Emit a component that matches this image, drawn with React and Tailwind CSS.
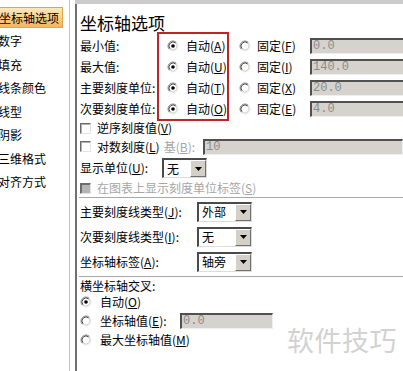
const leftItems = ['坐标轴选项', '数字', '填充', '线条颜色', '线型', '阴影', '三维格式', '对齐方式']

function Radio({ checked }) {
  return (
    <svg width="12" height="12" viewBox="0 0 12 12" className="shrink-0">
      <circle cx="6" cy="6" r="5" fill="#fff" />
      <path d="M2.46 9.54 A5 5 0 0 1 9.54 2.46" fill="none" stroke="#8a8a8a" strokeWidth="1" />
      <path d="M9.54 2.46 A5 5 0 0 1 2.46 9.54" fill="none" stroke="#ececec" strokeWidth="1" />
      <path d="M3.17 8.83 A4 4 0 0 1 8.83 3.17" fill="none" stroke="#4a4a4a" strokeWidth="1" />
      <path d="M8.83 3.17 A4 4 0 0 1 3.17 8.83" fill="none" stroke="#d4d0c8" strokeWidth="1" />
      {checked && <circle cx="6" cy="6" r="1.8" fill="#000" />}
    </svg>
  )
}

function Check({ disabled }) {
  return (
    <span
      className={`block w-[11px] h-[11px] shrink-0 border border-t-[#6a6a6a] border-l-[#6a6a6a] border-r-[#e4e4e4] border-b-[#e4e4e4] ${
        disabled ? 'bg-[#b4b4b4] shadow-[inset_1px_1px_0_#6e6e6e]' : 'bg-white shadow-[inset_1px_1px_0_#b0b0b0]'
      }`}
    />
  )
}

// mnemonic label, e.g. 自动(A)
function Mn({ text, k, colon }) {
  return (
    <span>
      {text}(<span className="underline">{k}</span>){colon ? ':' : ''}
    </span>
  )
}

function Field({ value, className }) {
  return (
    <div
      className={`h-[16px] flex items-center bg-[#d6d3ce] border-t-2 border-l-2 border-t-[#505050] border-l-[#505050] border-b border-r border-b-[#eeeeee] border-r-[#eeeeee] pl-[1px] font-['Liberation_Mono',monospace] text-[12px] text-[#8c8c8c] ${className}`}
    >
      {value}
    </div>
  )
}

function Select({ value, className }) {
  return (
    <div
      className={`h-[20px] flex items-center bg-white border-t-2 border-l-2 border-t-[#4a4a4a] border-l-[#4a4a4a] border-b border-r border-b-[#dcdcdc] border-r-[#dcdcdc] ${className}`}
    >
      <span className="flex-1 pl-[3px] text-[12px] text-black">{value}</span>
      <span className="w-[16px] h-full flex items-center justify-center bg-[#d4d0c8] border-l border-t border-l-white border-t-white border-r border-b border-r-[#707070] border-b-[#707070]">
        <svg width="7" height="4" viewBox="0 0 7 4">
          <path d="M0 0 H7 L3.5 4 Z" fill="#000" />
        </svg>
      </span>
    </div>
  )
}

function Divider() {
  return <div className="h-[2px] border-t border-t-[#a8a8a8] border-b border-b-white" />
}

const axisRows = [
  { label: '最小值:', ak: 'A', fk: 'F', value: '0.0' },
  { label: '最大值:', ak: 'U', fk: 'I', value: '140.0' },
  { label: '主要刻度单位:', ak: 'T', fk: 'X', value: '20.0' },
  { label: '次要刻度单位:', ak: 'O', fk: 'E', value: '4.0' },
]

export default function App() {
  return (
    <div className="relative w-[403px] h-[371px] overflow-hidden bg-white flex font-['Noto_Sans_CJK_SC','Liberation_Sans',sans-serif] text-[12px] text-black leading-none">
      {/* category list */}
      <div className="w-[70px] shrink-0 border-r border-r-[#c4c4c4] pt-[6px]">
        {leftItems.map((item, i) => (
          <div key={item} className="h-[23.5px] flex items-center">
            <span
              className={`h-[21px] flex items-center pl-[1px] -ml-[3px] ${
                i === 0
                  ? 'w-[66px] bg-gradient-to-b from-[#fde9bd] to-[#f4b45a] border border-[#e6a24a]'
                  : ''
              }`}
            >
              {item}
            </span>
          </div>
        ))}
      </div>

      {/* options panel */}
      <div className="ml-[5px] flex-1 min-w-0 flex flex-col">
        <div className="h-[4px] bg-[#cbcbcb]" />
        <div className="flex-1 border-l-2 border-l-[#707070] pl-[3px] flex flex-col">
          <div className="mt-[8px] h-[20px] flex items-center text-[17px]">坐标轴选项</div>

          <div className="mt-[3px] flex items-start">
            <div className="w-[77px] shrink-0 flex flex-col">
              {axisRows.map((r) => (
                <div key={r.label} className="h-[21px] flex items-center whitespace-nowrap">
                  {r.label}
                </div>
              ))}
            </div>
            <div className="w-[72px] shrink-0 -mt-[3px] -mb-[2px] border-2 border-[#bf2429] pt-[1px] pl-[8px] flex flex-col">
              {axisRows.map((r) => (
                <div key={r.ak} className="h-[21px] flex items-center gap-[7px] whitespace-nowrap">
                  <Radio checked />
                  <Mn text="自动" k={r.ak} />
                </div>
              ))}
            </div>
            <div className="ml-[10px] flex-1 flex flex-col">
              {axisRows.map((r) => (
                <div key={r.fk} className="h-[21px] flex items-center whitespace-nowrap">
                  <Radio />
                  <span className="ml-[6px] w-[53px]">
                    <Mn text="固定" k={r.fk} />
                  </span>
                  <Field value={r.value} className="w-[120px] shrink-0" />
                </div>
              ))}
            </div>
          </div>

          <div className="h-[18px] flex items-center gap-[6px]">
            <Check />
            <Mn text="逆序刻度值" k="V" />
          </div>
          <div className="h-[19px] flex items-center whitespace-nowrap">
            <Check />
            <span className="ml-[6px] w-[78px]">
              <Mn text="对数刻度" k="L" />
            </span>
            <span className="w-[46px] text-[#a6a6a6]">
              <Mn text="基" k="B" colon />
            </span>
            <Field value="10" className="w-[200px] shrink-0" />
          </div>
          <div className="h-[24px] flex items-center whitespace-nowrap">
            <span className="w-[82px]">
              <Mn text="显示单位" k="U" colon />
            </span>
            <Select value="无" className="w-[45px]" />
          </div>
          <div className="h-[16px] flex items-center gap-[6px] whitespace-nowrap text-[#a6a6a6]">
            <Check disabled />
            <Mn text="在图表上显示刻度单位标签" k="S" />
          </div>

          <div className="mt-[1px] -ml-[1px]">
            <Divider />
          </div>

          {[
            ['主要刻度线类型', 'J', '外部'],
            ['次要刻度线类型', 'I', '无'],
            ['坐标轴标签', 'A', '轴旁'],
          ].map(([label, k, v]) => (
            <div key={label} className="h-[25px] flex items-center whitespace-nowrap">
              <span className="w-[117px]">
                <Mn text={label} k={k} colon />
              </span>
              <Select value={v} className="w-[55px]" />
            </div>
          ))}

          <div className="mt-[2px] -ml-[1px]">
            <Divider />
          </div>

          <div className="h-[16px] flex items-center">横坐标轴交叉:</div>
          <div className="h-[15px] flex items-center gap-[8px]">
            <Radio checked />
            <Mn text="自动" k="O" />
          </div>
          <div className="h-[23px] flex items-center whitespace-nowrap">
            <Radio />
            <span className="ml-[8px] w-[80px]">
              <Mn text="坐标轴值" k="E" colon />
            </span>
            <Field value="0.0" className="w-[93px] shrink-0" />
          </div>
          <div className="h-[15px] flex items-center gap-[8px]">
            <Radio />
            <Mn text="最大坐标轴值" k="M" />
          </div>
        </div>
      </div>

      {/* watermark */}
      <div className="absolute left-[287px] top-[325px] text-[27px] leading-[30px] text-[#d2d2d2] tracking-[0.5px]">
        软件技巧
      </div>
    </div>
  )
}
